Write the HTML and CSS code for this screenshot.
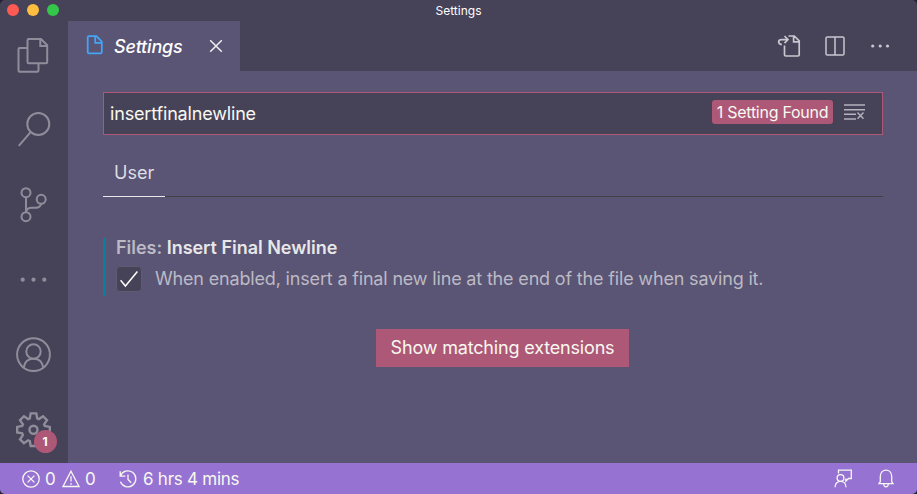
FILE: index.html
```html
<!DOCTYPE html>
<html lang="en">
<head>
<meta charset="utf-8">
<title>Settings</title>
<link rel="stylesheet" href="styles.css">
</head>
<body>
<div class="window">
  <header class="titlebar">
    <div class="lights"><i class="red"></i><i class="yellow"></i><i class="green"></i></div>
    <span class="window-title">Settings</span>
  </header>
  <div class="workbench">
    <nav class="activity">
      <div class="group">
        <svg class="act" viewBox="0 0 36 36"><path d="M12.5 11H4.7Q3.5 11 3.5 12.2V33.5Q3.5 34.8 4.7 34.8H22.3Q23.5 34.8 23.5 33.5V26.5M13.7 2H26L32.2 8.2V25Q32.2 26.2 31 26.2H13.7Q12.5 26.2 12.5 25V3.2Q12.5 2 13.7 2ZM25.3 2V8.9H32"/></svg>
        <svg class="act" viewBox="0 0 36 36"><circle cx="23.3" cy="12" r="11"/><path d="M15.6 20.2L3.8 33.8"/></svg>
        <svg class="act" viewBox="0 0 36 36"><circle cx="11" cy="5.7" r="4.5"/><circle cx="26.2" cy="12.3" r="4.5"/><circle cx="11" cy="29.7" r="4.5"/><path d="M11 10.2V25.2M26.2 16.8Q25 20.8 21 20.8H16.5Q12 20.8 11 25"/></svg>
        <svg class="act dots" viewBox="0 0 36 36"><circle cx="7.7" cy="17.7" r="2.1"/><circle cx="18.5" cy="17.7" r="2.1"/><circle cx="29.3" cy="17.7" r="2.1"/></svg>
      </div>
      <div class="group">
        <svg class="act" viewBox="0 0 36 36"><circle cx="18.5" cy="17.6" r="16.4"/><circle cx="18.5" cy="14.5" r="7.2"/><path d="M8.7 30.7C9.5 25 13 21.7 18.5 21.7S27.5 25 28.3 30.7"/></svg>
        <div class="manage">
          <svg class="act gear" viewBox="0 0 36 36"><g transform="translate(18.5 17.7)"><circle r="4"/><path d="M-3.7-11.3L-2.8-16.3H2.8L3.7-11.3L5.4-10.6L9.55-13.5L13.5-9.55L10.6-5.4L11.3-3.7L16.3-2.8V2.8L11.3 3.7L10.6 5.4L13.5 9.55L9.55 13.5L5.4 10.6L3.7 11.3L2.8 16.3H-2.8L-3.7 11.3L-5.4 10.6L-9.55 13.5L-13.5 9.55L-10.6 5.4L-11.3 3.7L-16.3 2.8V-2.8L-11.3-3.7L-10.6-5.4L-13.5-9.55L-9.55-13.5L-5.4-10.6Z"/></g></svg>
          <span class="badge">1</span>
        </div>
      </div>
    </nav>
    <main class="editor">
      <div class="tabs">
        <div class="tab">
          <svg class="file" viewBox="0 0 18 20"><path d="M3 1.2H10.5L15.8 6.5V17Q15.8 18.3 14.5 18.3H3Q1.7 18.3 1.7 17V2.5Q1.7 1.2 3 1.2ZM9.2 1.5V7.8H15.5"/></svg>
          <span class="tab-name">Settings</span>
          <svg class="close" viewBox="0 0 14 14"><path d="M1.2 1.2L12.8 12.8M12.8 1.2L1.2 12.8"/></svg>
        </div>
        <div class="actions">
          <svg class="open" viewBox="0 0 24 24"><path d="M11.5 2H17.3L22.2 6.9V20.8Q22.2 22 21 22H8.7Q7.5 22 7.5 20.8V11.5M16.6 2.2V7.9H22M4.8 10.7C.5 9.8.7 5.6 4.7 5.6H10.5M7.5 2L11 5.6L7.5 9.2"/></svg>
          <svg class="split" viewBox="0 0 20 20"><rect x="1" y="1" width="18" height="18" rx="1.3"/><path d="M10 1V19"/></svg>
          <svg class="more" viewBox="0 0 20 6"><circle cx="2.7" cy="3" r="1.6"/><circle cx="10.2" cy="3" r="1.6"/><circle cx="17.5" cy="3" r="1.6"/></svg>
        </div>
      </div>
      <section class="settings">
        <div class="search">
          <span class="query">insertfinalnewline</span>
          <span class="count">1 Setting Found</span>
          <svg class="clear" viewBox="0 0 21 16"><path d="M0 1H21M0 5.7H21M0 10.3H12M0 15H12M13.5 8.5L19.5 14.7M19.5 8.5L13.5 14.7"/></svg>
        </div>
        <div class="scope"><span class="user">User</span></div>
        <div class="setting">
          <div class="label"><span class="category">Files:</span> Insert Final Newline</div>
          <div class="option">
            <span class="checkbox"><svg viewBox="0 0 20 20"><path d="M1.6 11.2L6.4 17L18.4 2.4"/></svg></span>
            <span class="description">When enabled, insert a final new line at the end of the file when saving it.</span>
          </div>
        </div>
        <div class="matching"><span class="button">Show matching extensions</span></div>
      </section>
    </main>
  </div>
  <footer class="status">
    <svg class="error" viewBox="0 0 18 18"><circle cx="9" cy="9" r="8.2"/><path d="M5.6 5.6L12.4 12.4M12.4 5.6L5.6 12.4"/></svg>
    <span class="zero">0</span>
    <svg class="warn" viewBox="0 0 18 18"><path d="M9 1.2L17 16.5H1ZM9 6.3V11.5M9 13V14.8"/></svg>
    <span class="zero">0</span>
    <svg class="history" viewBox="0 0 18 18"><path d="M1.3 6.1A8 8 0 1 1 1.4 11.8M1.2 1.2V6.2H6.3M9 4.5V9.5L12.2 12.7"/></svg>
    <span class="time">6 hrs 4 mins</span>
    <svg class="feedback" viewBox="0 0 18 19"><path d="M4.5 4.5V1.2H17.3V9.5H14.5L11.8 12.2V9.5M1 18.3C1 10.3 12 10.3 12 18.3"/><circle cx="6.5" cy="9" r="3.4"/></svg>
    <svg class="bell" viewBox="0 0 16 19"><path d="M1 14.7L2.3 12.5V7.3C2.3-1 13.7-1 13.7 7.3V12.5L15 14.7ZM5.7 15C6 18.7 10 18.7 10.3 15"/></svg>
  </footer>
</div>
</body>
</html>
```

FILE: styles.css
```css
* { box-sizing: border-box; }
body { margin: 0; background: #242230; font-family: Inter, "Liberation Sans", sans-serif; color: #f0eff3; }
svg { display: block; flex: none; fill: none; stroke: currentColor; }
span { white-space: nowrap; }
.window { width: 917px; height: 494px; display: flex; flex-direction: column; overflow: hidden; border-radius: 5px; background: #464258; }
.titlebar { height: 21px; flex: none; display: grid; grid-template-columns: 1fr auto 1fr; align-items: center; }
.lights { display: flex; gap: 8px; padding-left: 7px; margin-top: -1px; }
.lights i { width: 12px; height: 12px; border-radius: 50%; }
.red { background: #ff5a54; }
.yellow { background: #ffbe40; }
.green { background: #34c84a; }
.window-title { font-size: 12px; color: #fff; }
.workbench { flex: 1; display: flex; min-height: 0; }
.activity { width: 68px; padding: 16px 0 15px 15px; display: flex; flex-direction: column; justify-content: space-between; color: #908d9b; }
.group { display: flex; flex-direction: column; gap: 39px; }
.act { width: 36px; height: 36px; stroke-width: 2; }
.gear { stroke-width: 2.4; }
.dots, .more { fill: currentColor; stroke: none; }
.manage { position: relative; width: 36px; height: 36px; }
.badge { position: absolute; left: 19px; top: 18px; width: 23px; height: 23px; padding-right: 1px; border-radius: 50%; background: #ae5877; color: #fff; font-size: 12px; font-weight: 700; line-height: 23px; text-align: center; }
.editor { flex: 1; background: #5a5475; display: flex; flex-direction: column; }
.tabs { height: 50px; display: flex; justify-content: space-between; background: #464258; }
.tab { width: 172px; padding-left: 18px; display: flex; align-items: center; background: #5a5475; }
.file { width: 18px; height: 20px; margin-top: -3px; color: #42a5f5; stroke-width: 1.8; }
.tab-name { margin-left: 10px; width: 86px; font-size: 18px; font-style: italic; font-weight: 500; letter-spacing: -.2px; color: #fff; }
.close { width: 14px; height: 14px; margin-left: 9px; stroke-width: 1.5; }
.actions { display: flex; align-items: center; padding-right: 27px; color: #c8c7cf; }
.open { width: 24px; height: 24px; stroke-width: 1.7; }
.split { width: 20px; height: 20px; margin-left: 24px; stroke-width: 1.5; }
.more { width: 20px; height: 6px; margin-left: 25px; }
.settings { padding: 21px 34px 0 35px; }
.search { height: 43px; display: flex; align-items: center; padding: 0 17px 0 6px; border: 1px solid #ae5877; background: #464258; }
.query { flex: 1; font-size: 18px; letter-spacing: -.17px; margin-top: -1px; color: #f8f8f0; }
.count { width: 121px; height: 24px; margin-top: -3px; border-radius: 3px; background: #ae5877; color: #f8f8f0; font-size: 16px; letter-spacing: -.27px; line-height: 24px; text-align: center; }
.clear { width: 21px; height: 16px; margin: -3px 0 0 11px; color: #b5b3bc; stroke-width: 1.4; }
.scope { height: 62px; border-bottom: 1px solid #414047; display: flex; }
.user { width: 62px; height: 62px; padding-left: 11px; border-bottom: 1px solid #e7e7e7; font-size: 18px; line-height: 75px; color: #dedde3; }
.setting { height: 58px; margin-top: 41px; padding-left: 10px; border-left: 3px solid #0c7d9d; }
.label { height: 20px; font-size: 18px; line-height: 20px; font-weight: 600; letter-spacing: -.02px; color: #e7e7e7; }
.category { color: #bcbac4; }
.option { height: 26px; margin-top: 8px; display: flex; align-items: center; }
.checkbox { width: 26px; height: 26px; border: 1px solid #5f5b70; border-radius: 4px; background: #464258; display: grid; place-items: center; }
.checkbox svg { width: 20px; height: 20px; stroke-width: 1.5; color: #fff; }
.description { margin: -2px 0 0 13px; font-size: 18px; letter-spacing: -.17px; color: #bcbac4; }
.matching { margin-top: 33px; display: flex; justify-content: center; padding-left: 19px; }
.button { width: 253px; height: 38px; background: #ae5877; color: #f8f8f0; font-size: 18px; letter-spacing: -.17px; line-height: 38px; text-align: center; }
.status { height: 31px; flex: none; display: flex; align-items: center; padding: 0 23px 0 22px; background: #9673d3; font-size: 17px; color: #f8f8f0; }
.status svg { width: 18px; height: 18px; stroke-width: 1.3; }
.zero { width: 11px; margin-left: 5px; }
.status .warn { margin-left: 6px; }
.status .history { margin-left: 23px; }
.time { margin-left: 6px; flex: 1; letter-spacing: -.25px; }
.status .feedback { height: 19px; }
.status .bell { width: 16px; height: 19px; margin-left: 26px; }
```
